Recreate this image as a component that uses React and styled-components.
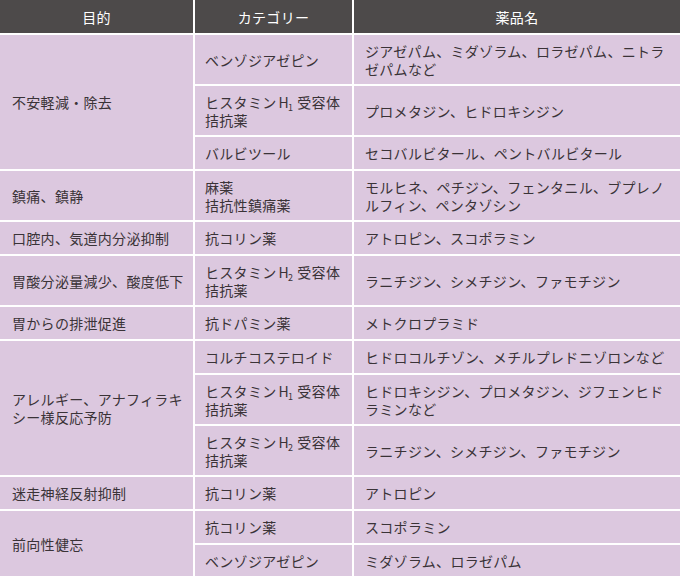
import React from "react";
import styled, { createGlobalStyle } from "styled-components";

const Global = createGlobalStyle`
  html, body { margin: 0; padding: 0; background: #ffffff; }
  body { font-family: "Noto Sans CJK JP", "Noto Sans", sans-serif; overflow: hidden; }
`;

const Frame = styled.div`
  width: 680px;
  height: 576px;
  overflow: hidden;
  background: #ffffff;
`;

const Table = styled.table`
  table-layout: fixed;
  width: 684px;
  margin: -2px;
  border-collapse: separate;
  border-spacing: 2px;
  font-size: 14px;
  line-height: 18px;
  letter-spacing: 0.3px;
  color: #3a3337;
`;

const Head = styled.th`
  height: 33px;
  padding: 0;
  background: #4d4a4a;
  color: #ffffff;
  font-weight: 400;
  text-align: center;
  vertical-align: middle;
`;

const Cell = styled.td`
  height: ${(p) => (p.$tall ? 49 : 32)}px;
  padding: 0 6px 0 ${(p) => p.$pl || 10}px;
  background: #dcc8df;
  vertical-align: middle;
  text-align: left;
  box-sizing: border-box;
`;

const Sub = styled.span`
  font-size: 9px;
  vertical-align: -3px;
  line-height: 0;
  margin-right: 4px;
  margin-left: -1px;
`;

const H = ({ n }) => (
  <>
    <span style={{ marginLeft: 2 }}>H</span>
    <Sub>{n}</Sub>
  </>
);

const Antagonist = ({ n }) => (
  <>
    ヒスタミン<H n={n} />受容体
    <br />
    拮抗薬
  </>
);

export default function App() {
  return (
    <Frame>
      <Global />
      <Table>
        <colgroup>
          <col style={{ width: 193 }} />
          <col style={{ width: 157 }} />
          <col style={{ width: 326 }} />
        </colgroup>
        <thead>
          <tr>
            <Head>目的</Head>
            <Head>カテゴリー</Head>
            <Head>薬品名</Head>
          </tr>
        </thead>
        <tbody>
          <tr>
            <Cell rowSpan={3} $pl={12}>不安軽減・除去</Cell>
            <Cell $tall>ベンゾジアゼピン</Cell>
            <Cell $tall $pl={11}>ジアゼパム、ミダゾラム、ロラゼパム、ニトラ<br />ゼパムなど</Cell>
          </tr>
          <tr>
            <Cell $tall><Antagonist n="1" /></Cell>
            <Cell $tall $pl={11}>プロメタジン、ヒドロキシジン</Cell>
          </tr>
          <tr>
            <Cell>バルビツール</Cell>
            <Cell $pl={11}>セコバルビタール、ペントバルビタール</Cell>
          </tr>
          <tr>
            <Cell $tall $pl={12}>鎮痛、鎮静</Cell>
            <Cell $tall>麻薬<br />拮抗性鎮痛薬</Cell>
            <Cell $tall $pl={11}>モルヒネ、ペチジン、フェンタニル、ブプレノ<br />ルフィン、ペンタゾシン</Cell>
          </tr>
          <tr>
            <Cell $pl={12}>口腔内、気道内分泌抑制</Cell>
            <Cell>抗コリン薬</Cell>
            <Cell $pl={11}>アトロピン、スコポラミン</Cell>
          </tr>
          <tr>
            <Cell $tall $pl={12}>胃酸分泌量減少、酸度低下</Cell>
            <Cell $tall><Antagonist n="2" /></Cell>
            <Cell $tall $pl={11}>ラニチジン、シメチジン、ファモチジン</Cell>
          </tr>
          <tr>
            <Cell $pl={12}>胃からの排泄促進</Cell>
            <Cell>抗ドパミン薬</Cell>
            <Cell $pl={11}>メトクロプラミド</Cell>
          </tr>
          <tr>
            <Cell rowSpan={3} $pl={12}>アレルギー、アナフィラキ<br />シー様反応予防</Cell>
            <Cell>コルチコステロイド</Cell>
            <Cell $pl={11}>ヒドロコルチゾン、メチルプレドニゾロンなど</Cell>
          </tr>
          <tr>
            <Cell $tall><Antagonist n="1" /></Cell>
            <Cell $tall $pl={11}>ヒドロキシジン、プロメタジン、ジフェンヒド<br />ラミンなど</Cell>
          </tr>
          <tr>
            <Cell $tall><Antagonist n="2" /></Cell>
            <Cell $tall $pl={11}>ラニチジン、シメチジン、ファモチジン</Cell>
          </tr>
          <tr>
            <Cell $pl={12}>迷走神経反射抑制</Cell>
            <Cell>抗コリン薬</Cell>
            <Cell $pl={11}>アトロピン</Cell>
          </tr>
          <tr>
            <Cell rowSpan={2} $pl={12}>前向性健忘</Cell>
            <Cell>抗コリン薬</Cell>
            <Cell $pl={11}>スコポラミン</Cell>
          </tr>
          <tr>
            <Cell>ベンゾジアゼピン</Cell>
            <Cell $pl={11}>ミダゾラム、ロラゼパム</Cell>
          </tr>
        </tbody>
      </Table>
    </Frame>
  );
}
